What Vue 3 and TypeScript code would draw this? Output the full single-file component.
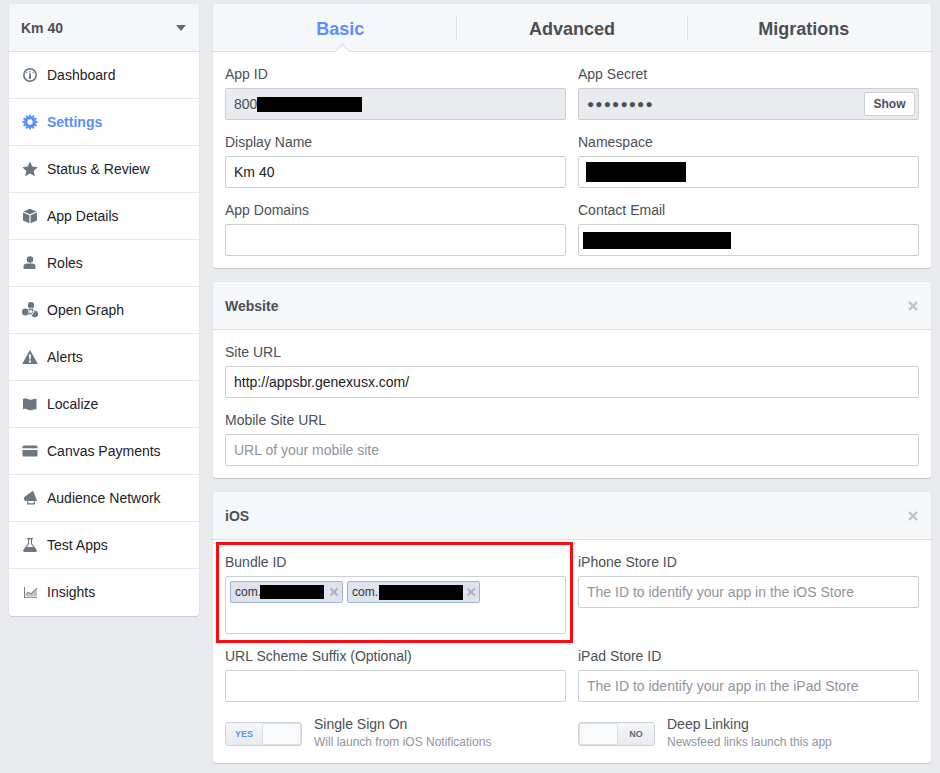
<script setup lang="ts">
interface NavItem {
  label: string
  icon: string
  shade?: string
  active?: boolean
}

// 12 toothed gear used for the Settings entry
function gearPath(): string {
  const pts: string[] = []
  const teeth = 12
  for (let i = 0; i < teeth; i++) {
    const step = (Math.PI * 2) / teeth
    const a = i * step
    const corners = [
      [a - step * 0.24, 7.6],
      [a + step * 0.24, 7.6],
      [a + step * 0.3, 5.9],
      [a + step * 0.7, 5.9]
    ]
    for (const [ang, r] of corners) {
      pts.push(`${(8 + Math.sin(ang) * r).toFixed(2)} ${(8 - Math.cos(ang) * r).toFixed(2)}`)
    }
  }
  return `M${pts.join('L')}ZM8 5.3a2.7 2.7 0 1 0 0 5.4a2.7 2.7 0 1 0 0-5.4Z`
}

const navItems: NavItem[] = [
  {
    label: 'Dashboard',
    icon: 'M8 1a7 7 0 1 0 0 14A7 7 0 1 0 8 1ZM8 2.6a5.4 5.4 0 1 1 0 10.8A5.4 5.4 0 1 1 8 2.6ZM7.4 3.6h1.2v1.2H7.4ZM4.3 5.1h1.1v1.1H4.3ZM10.6 5.1h1.1v1.1h-1.1ZM7.5 5.6h1l.7 5.2a1.2 1.2 0 0 1-2.4 0Z'
  },
  { label: 'Settings', icon: gearPath(), active: true },
  {
    label: 'Status & Review',
    icon: 'M8 .6l2.3 5 5.4.6-4 3.7 1.1 5.4L8 12.6l-4.8 2.7 1.1-5.4-4-3.7 5.4-.6Z'
  },
  {
    label: 'App Details',
    icon: 'M8 .8l6.6 2.7L8 6.2 1.4 3.5ZM1 4.6l6.4 2.7v7.9L1 12.4ZM15 4.6v7.8l-6.4 2.8V7.3Z'
  },
  {
    label: 'Roles',
    icon: 'M8 1.2a3.3 3.3 0 1 0 0 6.6a3.3 3.3 0 1 0 0-6.6ZM5.8 8.4h4.4c2 0 3.2 1 3.2 2.6v3.1H1.6V11c0-1.6 1.2-2.6 3.2-2.6Z'
  },
  {
    label: 'Open Graph',
    icon: 'M9 0a3.2 3.2 0 1 0 0 6.4A3.2 3.2 0 0 0 9 0ZM3.4 6.6a3.4 3.4 0 1 0 0 6.8 3.4 3.4 0 0 0 0-6.8ZM12.8 8.8a3.2 3.2 0 1 0 0 6.4 3.2 3.2 0 0 0 0-6.4ZM8 5.8l1.7-.2 3 4.4-1.4 1.2ZM5.4 7.8l3-1.4.6 1.4-3 1.4ZM6 10.4l5 .6v1.5l-5-.6Z'
  },
  {
    label: 'Alerts',
    icon: 'M8 1l7.6 13.4a.4.4 0 0 1-.4.6H.8a.4.4 0 0 1-.4-.6ZM7 5.6l.3 5h1.4l.3-5ZM7 11.6v1.9h2v-1.9Z'
  },
  {
    label: 'Localize',
    icon: 'M1 3c1.5-.9 2.8-.9 4.6-.1s3.2 1 4.6.5 2.8-.8 4.3-.4v10.6c-1.5-.5-2.9-.2-4.3.3s-2.9.4-4.6-.4-3.1-1-4.6 0Z'
  },
  {
    label: 'Canvas Payments',
    icon: 'M1.8 2.5h12.4c.7 0 1.3.6 1.3 1.3v1.4H.5V3.8c0-.7.6-1.3 1.3-1.3ZM.5 7h15v5.2c0 .7-.6 1.3-1.3 1.3H1.8c-.7 0-1.3-.6-1.3-1.3Z'
  },
  {
    label: 'Audience Network',
    icon: 'M11 .8L15.2 11H4.2C1.8 11 .9 8 3 6.6ZM5 11.6h1.3v1.6h5.4v-1.6H13v2.9H5Z'
  },
  {
    label: 'Test Apps',
    icon: 'M5 1h6v1.2H10v4.2l4.6 6.4c.7 1.1.2 2.2-1.2 2.2H2.6c-1.4 0-1.9-1.1-1.2-2.2L6 6.4V2.2H5ZM7.1 2.2v4.6L4.8 10h6.4L8.9 6.8V2.2Z'
  },
  {
    label: 'Insights',
    icon: 'M2 3h.9v10.2H15v.9H2ZM3.4 10.3l2.9-2.6 2.5 1.6 5.9-5.2.6.7-6.4 5.6-2.5-1.6-2.5 2.2Z',
    shade: 'M3.4 12.6v-1.2l2.9-2.5 2.5 1.6L15 5.2v7.4Z'
  }
]
</script>

<template>
  <div class="page">
    <aside class="sidebar">
      <div class="app-switcher">
        <span>Km 40</span>
        <i class="caret"></i>
      </div>
      <a
        v-for="item in navItems"
        :key="item.label"
        class="nav-item"
        :class="{ active: item.active }"
      >
        <svg class="nav-icon" viewBox="0 0 16 16">
          <path v-if="item.shade" :d="item.shade" opacity="0.45" />
          <path :d="item.icon" fill-rule="evenodd" />
        </svg>
        {{ item.label }}
      </a>
    </aside>

    <main class="content">
      <section class="card">
        <nav class="tabs">
          <div class="tab active">Basic</div>
          <div class="tab">Advanced</div>
          <div class="tab">Migrations</div>
        </nav>
        <div class="form-grid">
          <div class="field">
            <label>App ID</label>
            <div class="box readonly">800<span class="redact app-id"></span></div>
          </div>
          <div class="field">
            <label>App Secret</label>
            <div class="box readonly secret">
              <span class="dots">●●●●●●●●</span>
              <button class="show-btn">Show</button>
            </div>
          </div>
          <div class="field">
            <label>Display Name</label>
            <div class="box">Km 40</div>
          </div>
          <div class="field">
            <label>Namespace</label>
            <div class="box"><span class="redact namespace"></span></div>
          </div>
          <div class="field">
            <label>App Domains</label>
            <div class="box"></div>
          </div>
          <div class="field">
            <label>Contact Email</label>
            <div class="box"><span class="redact email"></span></div>
          </div>
        </div>
      </section>

      <section class="card">
        <header class="card-head">
          <h3>Website</h3>
          <svg class="close" viewBox="0 0 10 10"><path d="M1 1l8 8M9 1L1 9" /></svg>
        </header>
        <div class="form-stack">
          <div class="field">
            <label>Site URL</label>
            <div class="box">http://appsbr.genexusx.com/</div>
          </div>
          <div class="field">
            <label>Mobile Site URL</label>
            <div class="box placeholder">URL of your mobile site</div>
          </div>
        </div>
      </section>

      <section class="card">
        <header class="card-head">
          <h3>iOS</h3>
          <svg class="close" viewBox="0 0 10 10"><path d="M1 1l8 8M9 1L1 9" /></svg>
        </header>
        <div class="form-grid">
          <div class="field bundle">
            <label>Bundle ID</label>
            <div class="box tokens">
              <span class="chip">
                com.<span class="redact chip-one"></span>
                <svg class="chip-x" viewBox="0 0 10 10"><path d="M1.5 1.5l7 7M8.5 1.5l-7 7" /></svg>
              </span>
              <span class="chip">
                com.<span class="redact chip-two"></span>
                <svg class="chip-x" viewBox="0 0 10 10"><path d="M1.5 1.5l7 7M8.5 1.5l-7 7" /></svg>
              </span>
            </div>
            <div class="highlight"></div>
          </div>
          <div class="field">
            <label>iPhone Store ID</label>
            <div class="box placeholder">The ID to identify your app in the iOS Store</div>
          </div>
          <div class="field">
            <label>URL Scheme Suffix (Optional)</label>
            <div class="box"></div>
          </div>
          <div class="field">
            <label>iPad Store ID</label>
            <div class="box placeholder">The ID to identify your app in the iPad Store</div>
          </div>
          <div class="option">
            <div class="switch">
              <span class="switch-label on">YES</span>
              <span class="knob"></span>
            </div>
            <div class="option-text">
              <div class="option-title">Single Sign On</div>
              <div class="option-sub">Will launch from iOS Notifications</div>
            </div>
          </div>
          <div class="option">
            <div class="switch">
              <span class="knob"></span>
              <span class="switch-label">NO</span>
            </div>
            <div class="option-text">
              <div class="option-title">Deep Linking</div>
              <div class="option-sub">Newsfeed links launch this app</div>
            </div>
          </div>
        </div>
      </section>
    </main>
  </div>
</template>

<style>
html,
body {
  margin: 0;
  background: #e9ebee;
}
</style>

<style scoped>
.page {
  display: flex;
  align-items: flex-start;
  gap: 14px;
  padding: 4px 9px 10px;
  font-family: "Liberation Sans", Arial, sans-serif;
  font-size: 14px;
  color: #4b4f56;
}
.sidebar {
  width: 190px;
  flex: none;
  background: #fff;
  border-radius: 3px;
  box-shadow: 0 0 1px rgba(0, 0, 0, 0.12), 0 1px 1px rgba(0, 0, 0, 0.14);
  overflow: hidden;
}
.app-switcher {
  height: 47px;
  display: flex;
  align-items: center;
  justify-content: space-between;
  padding: 0 13px 0 12px;
  background: #f6f7f9;
  border-bottom: 1px solid #dddfe2;
  font-weight: bold;
}
.caret {
  width: 0;
  height: 0;
  border-left: 5px solid transparent;
  border-right: 5px solid transparent;
  border-top: 6px solid #606770;
}
.nav-item {
  height: 46px;
  display: flex;
  align-items: center;
  gap: 9px;
  padding-left: 13px;
  color: #1d2129;
  border-bottom: 1px solid #e5e6e9;
}
.nav-item:last-child {
  border-bottom: 0;
  padding-bottom: 1px;
}
.nav-item.active {
  color: #5890ff;
  font-weight: bold;
}
.nav-icon {
  width: 16px;
  height: 16px;
  fill: #6b7683;
  flex: none;
}
.active .nav-icon {
  fill: #5890ff;
}
.content {
  width: 718px;
  display: flex;
  flex-direction: column;
  gap: 14px;
}
.card {
  background: #fff;
  border-radius: 3px;
  box-shadow: 0 0 1px rgba(0, 0, 0, 0.12), 0 1px 1px rgba(0, 0, 0, 0.14);
}
.tabs {
  height: 47px;
  display: flex;
  align-items: center;
  padding: 0 12px;
  background: #f6f7f9;
  border-bottom: 1px solid #dddfe2;
  border-radius: 3px 3px 0 0;
}
.tab {
  position: relative;
  flex: 1;
  height: 24px;
  line-height: 26px;
  text-align: center;
  font-size: 18px;
  font-weight: bold;
  border-left: 1px solid #dddfe2;
}
.tab:first-child {
  border-left: 0;
}
.tab.active {
  color: #5890ff;
}
.tab.active::after {
  content: "";
  position: absolute;
  left: 50%;
  bottom: -17px;
  width: 10px;
  height: 10px;
  margin-left: -3px;
  background: #fff;
  border-left: 1px solid #dddfe2;
  border-top: 1px solid #dddfe2;
  transform: rotate(45deg);
}
.card-head {
  height: 47px;
  display: flex;
  align-items: center;
  justify-content: space-between;
  padding: 0 13px 0 12px;
  background: #f6f7f9;
  border-bottom: 1px solid #dddfe2;
  border-radius: 3px 3px 0 0;
}
.card-head h3 {
  margin: 0;
  font-size: 14px;
  font-weight: bold;
}
.close {
  width: 10px;
  height: 10px;
  fill: none;
  stroke: #bec2c9;
  stroke-width: 2.4;
}
.form-grid {
  display: grid;
  grid-template-columns: 341px 341px;
  gap: 12px;
  padding: 12px;
}
.form-stack {
  display: flex;
  flex-direction: column;
  gap: 12px;
  padding: 12px;
}
.field {
  position: relative;
  min-width: 0;
}
.field label {
  display: block;
  height: 24px;
  line-height: 20px;
}
.box {
  box-sizing: border-box;
  height: 32px;
  display: flex;
  align-items: center;
  padding: 0 8px;
  background: #fff;
  border: 1px solid #ccd0d5;
  border-radius: 2px;
  color: #1d2129;
}
.box.readonly {
  background: #e9ebee;
  color: #4b4f56;
}
.box.placeholder {
  color: #90949c;
}
.secret {
  justify-content: space-between;
  padding-right: 3px;
}
.dots {
  font-size: 12px;
  letter-spacing: 1.1px;
  color: #4b4f56;
}
.show-btn {
  box-sizing: border-box;
  width: 51px;
  height: 24px;
  padding: 0;
  background: #fff;
  border: 1px solid #ccd0d5;
  border-radius: 2px;
  font-family: inherit;
  font-size: 12px;
  font-weight: bold;
  color: #4b4f56;
}
.redact {
  display: inline-block;
  background: #000;
}
.app-id {
  width: 105px;
  height: 15px;
}
.namespace {
  width: 100px;
  height: 20px;
  margin-left: -1px;
}
.email {
  width: 148px;
  height: 17px;
  margin-left: -4px;
}
.tokens {
  height: 58px;
  align-items: flex-start;
  gap: 4px;
  padding: 4px;
}
.chip {
  box-sizing: border-box;
  height: 22px;
  display: inline-flex;
  align-items: center;
  padding-left: 4px;
  background: #dfe3ee;
  border: 1px solid #9cb4d8;
  border-radius: 2px;
  font-size: 12px;
  color: #333;
}
.chip-one {
  width: 64px;
  height: 14px;
  margin-left: -1px;
}
.chip-two {
  width: 84px;
  height: 15px;
  margin-left: 1px;
}
.chip-x {
  width: 10px;
  height: 10px;
  margin: 0 3px 0 5px;
  fill: none;
  stroke: #a9aeb8;
  stroke-width: 1.8;
}
.chip-two + .chip-x {
  margin-left: 3px;
}
.highlight {
  position: absolute;
  left: -9px;
  top: -10px;
  box-sizing: border-box;
  width: 357px;
  height: 101px;
  border: 3px solid #fb0d0d;
  pointer-events: none;
}
.option {
  height: 37px;
  display: flex;
  gap: 12px;
}
.switch {
  box-sizing: border-box;
  width: 77px;
  height: 24px;
  margin-top: 8px;
  display: flex;
  flex: none;
  background: linear-gradient(#f6f7f9, #e9ebee);
  border: 1px solid #ccd0d5;
  border-radius: 3px;
}
.switch-label {
  flex: 1;
  text-align: center;
  line-height: 22px;
  font-size: 9px;
  font-weight: bold;
  color: #606770;
}
.switch-label.on {
  color: #5890ff;
}
.knob {
  box-sizing: border-box;
  width: 39px;
  height: 22px;
  background: #f8f9fa;
  border: 1px solid #dddfe2;
  border-radius: 2px;
}
.option-title {
  height: 20px;
  line-height: 20px;
}
.option-sub {
  height: 17px;
  line-height: 17px;
  font-size: 12px;
  color: #90949c;
}
</style>
